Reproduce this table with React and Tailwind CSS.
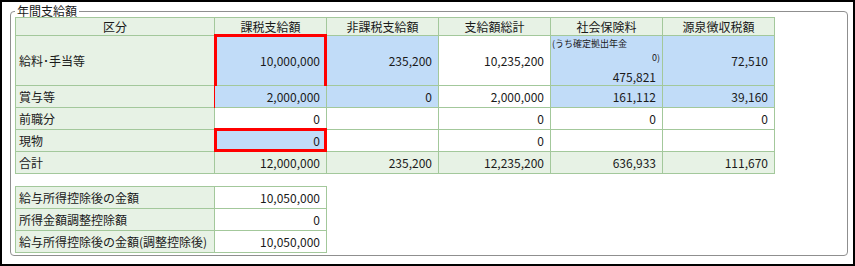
import React from "react";

const BORDER = "border-[#a3c89b]";
const CELL = `border-r border-b ${BORDER} flex items-center`;

const bgOf = {
  green: "bg-[#e7f2e5]",
  blue: "bg-[#c1dcf8]",
  white: "bg-white",
};

const headers = ["区分", "課税支給額", "非課税支給額", "支給額総計", "社会保険料", "源泉徴収税額"];

// 各行: label, [value, bg]
const rows = [
  {
    label: "給料･手当等",
    cells: [
      ["10,000,000", "blue", "red2"],
      ["235,200", "blue"],
      ["10,235,200", "white"],
      ["475,821", "blue", "shakai"],
      ["72,510", "blue"],
    ],
  },
  {
    label: "賞与等",
    cells: [
      ["2,000,000", "blue"],
      ["0", "blue"],
      ["2,000,000", "white"],
      ["161,112", "blue"],
      ["39,160", "blue"],
    ],
  },
  {
    label: "前職分",
    cells: [
      ["0", "white"],
      ["", "white"],
      ["0", "white"],
      ["0", "white"],
      ["0", "white"],
    ],
  },
  {
    label: "現物",
    cells: [
      ["0", "blue", "red1"],
      ["", "white"],
      ["0", "white"],
      ["", "white"],
      ["", "white"],
    ],
  },
  {
    label: "合計",
    cells: [
      ["12,000,000", "green"],
      ["235,200", "green"],
      ["12,235,200", "green"],
      ["636,933", "green"],
      ["111,670", "green"],
    ],
  },
];

const deductions = [
  ["給与所得控除後の金額", "10,050,000"],
  ["所得金額調整控除額", "0"],
  ["給与所得控除後の金額(調整控除後)", "10,050,000"],
];

function ValueCell({ value, bg, extra }) {
  if (extra === "shakai") {
    return (
      <div className={`border-r border-b ${BORDER} ${bgOf[bg]} flex flex-col pt-[3px]`}>
        <div className="text-[9px] leading-[10px] pl-px whitespace-nowrap">(うち確定拠出年金</div>
        <div className="text-[9px] leading-[10px] mt-[4px] text-right pr-[2px]">0)</div>
        <div className="leading-[14px] mt-[7px] text-right pr-[6px]">{value}</div>
      </div>
    );
  }
  return (
    <div className={`${CELL} ${bgOf[bg]} justify-end pr-[6px] relative`}>
      {value}
      {extra === "red2" && (
        <div className="absolute -left-px -top-[2px] w-[113px] h-[74px] border-[3px] border-[#ff0000] pointer-events-none" />
      )}
      {extra === "red1" && (
        <div className="absolute -left-px -top-[2px] w-[113px] h-[24px] border-[3px] border-[#ff0000] pointer-events-none" />
      )}
    </div>
  );
}

export default function App() {
  return (
    <div
      className="w-[855px] h-[266px] border-2 border-black bg-white pt-[3px] pl-[8px] pr-[5px] pb-[8px] text-[12px] text-[#1a1a1a]"
      style={{ fontFamily: '"Noto Sans CJK JP", "Noto Sans", sans-serif' }}
    >
      <fieldset className="h-full border border-[#8f8f8f] rounded-[4px] pl-[4px] pb-[2px]">
        <legend className="px-[2px] leading-[12px] text-[12px]">年間支給額</legend>

        <div className={`grid grid-cols-[199px_repeat(5,112px)] grid-rows-[18px_50px_repeat(4,22px)] w-fit border-t border-l ${BORDER} leading-none`}>
          {headers.map((h) => (
            <div key={h} className={`${CELL} ${bgOf.green} justify-center`}>
              {h}
            </div>
          ))}
          {rows.map((r) => (
            <React.Fragment key={r.label}>
              <div className={`${CELL} ${bgOf.green} pl-[3px]`}>{r.label}</div>
              {r.cells.map(([v, bg, extra], i) => (
                <ValueCell key={i} value={v} bg={bg} extra={extra} />
              ))}
            </React.Fragment>
          ))}
        </div>

        <div className={`mt-[12px] grid grid-cols-[199px_112px] grid-rows-[repeat(3,22px)] w-fit border-t border-l ${BORDER} leading-none`}>
          {deductions.map(([label, v]) => (
            <React.Fragment key={label}>
              <div className={`${CELL} ${bgOf.green} pl-[3px]`}>{label}</div>
              <div className={`${CELL} bg-white justify-end pr-[6px]`}>{v}</div>
            </React.Fragment>
          ))}
        </div>
      </fieldset>
    </div>
  );
}
